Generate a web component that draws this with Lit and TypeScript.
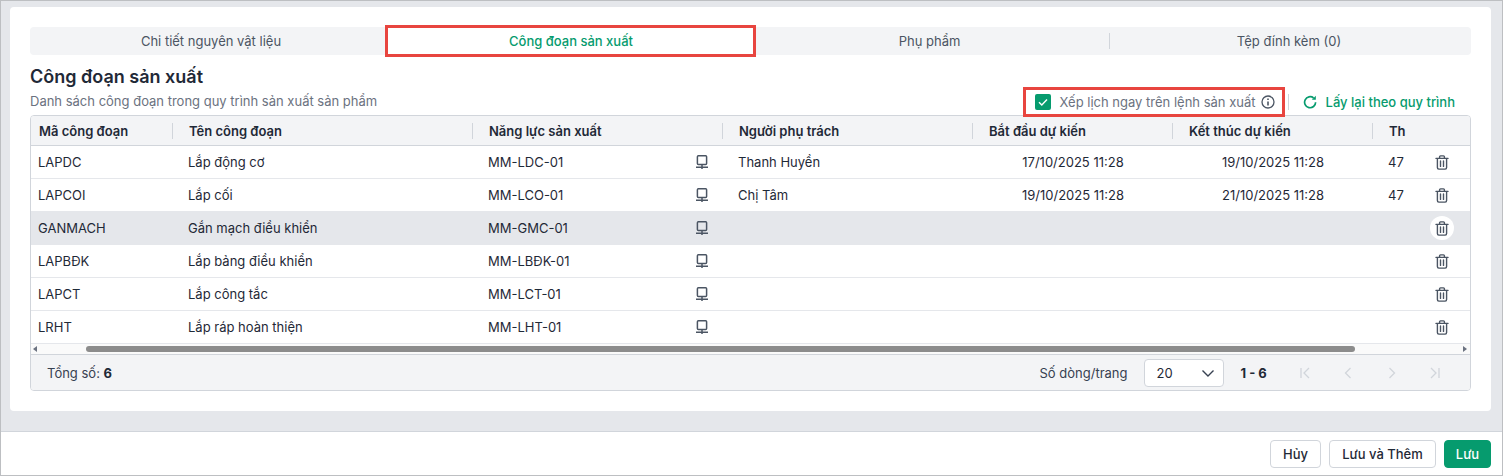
import { LitElement, html, css, svg } from "lit";
import { customElement } from "lit/decorators.js";

const ROWS = [
  { code: "LAPDC", name: "Lắp động cơ", cap: "MM-LDC-01", owner: "Thanh Huyền", start: "17/10/2025 11:28", end: "19/10/2025 11:28", th: "47" },
  { code: "LAPCOI", name: "Lắp cối", cap: "MM-LCO-01", owner: "Chị Tâm", start: "19/10/2025 11:28", end: "21/10/2025 11:28", th: "47" },
  { code: "GANMACH", name: "Gắn mạch điều khiển", cap: "MM-GMC-01", owner: "", start: "", end: "", th: "", hover: true },
  { code: "LAPBĐK", name: "Lắp bảng điều khiển", cap: "MM-LBĐK-01", owner: "", start: "", end: "", th: "" },
  { code: "LAPCT", name: "Lắp công tắc", cap: "MM-LCT-01", owner: "", start: "", end: "", th: "" },
  { code: "LRHT", name: "Lắp ráp hoàn thiện", cap: "MM-LHT-01", owner: "", start: "", end: "", th: "" },
];

const HEADERS = ["Mã công đoạn", "Tên công đoạn", "Năng lực sản xuất", "Người phụ trách", "Bắt đầu dự kiến", "Kết thúc dự kiến", "Th"];

const netIcon = html`<svg class="net" width="14" height="15" viewBox="0 0 14 15" fill="none" stroke="#4b5563" stroke-width="1.5">
  <rect x="2.4" y="0.8" width="9.2" height="8.6" rx="1"></rect>
  <path d="M7 9.4v4.6M1 12.2h12"></path>
</svg>`;

const trashIcon = svg`<svg width="14" height="15" viewBox="0 0 14 15" fill="none" stroke="#4b5563" stroke-width="1.4" stroke-linecap="round" stroke-linejoin="round">
  <path d="M1 3.4h12"></path>
  <path d="M4.6 3.2V1.8c0-.5.4-.9.9-.9h3c.5 0 .9.4.9.9v1.4"></path>
  <path d="M2.4 3.6v9c0 .8.6 1.5 1.4 1.5h6.4c.8 0 1.4-.7 1.4-1.5v-9"></path>
  <path d="M5.5 6v5.4M8.5 6v5.4"></path>
</svg>`;

@customElement("app-root")
export class AppRoot extends LitElement {
  static styles = css`
    :host {
      display: block;
      width: 1503px;
      height: 476px;
      font-family: Inter, "Noto Sans", sans-serif;
      font-size: 13px;
      color: #1f2937;
    }
    * { box-sizing: border-box; }
    .page {
      width: 100%;
      height: 100%;
      display: flex;
      flex-direction: column;
      background: #e5e7eb;
      border: 1px solid #bdbfc2;
      overflow: hidden;
    }
    .card {
      margin: 6px 11px 0 9px;
      height: 404px;
      flex: none;
      background: #fff;
      border-radius: 4px;
      padding: 20px 20px 0;
    }
    .tabs {
      display: grid;
      grid-template-columns: 362px 358px 359px 362px;
      height: 28px;
      background: #f3f4f6;
      border-radius: 4px;
      color: #4b5563;
    }
    .tab {
      display: flex;
      align-items: center;
      justify-content: center;
      position: relative;
    }
    .tab.active {
      margin: 1px -3px 1px -4px;
      padding-left: 1px;
      background: #fff;
      color: #069b6e;
      font-weight: 500;
      outline: 3px solid #e8453f;
    }
    .tab.sep { padding-right: 2px; }
    .tab.sep::before {
      content: "";
      position: absolute;
      left: 0;
      top: 6px;
      bottom: 6px;
      width: 1px;
      background: #d1d5db;
    }
    .heading {
      display: flex;
      justify-content: space-between;
      align-items: flex-end;
      height: 60px;
    }
    h2 {
      margin: 0;
      font-size: 18px;
      line-height: 24px;
      font-weight: 600;
      color: #1f2937;
      padding-top: 12px;
    }
    .sub {
      margin-top: 2px;
      line-height: 20px;
      color: #6b7280;
      padding-bottom: 4px;
    }
    .tools {
      display: flex;
      align-items: center;
      height: 24px;
      margin-bottom: 1px;
      padding-right: 16px;
    }
    .sched {
      display: flex;
      align-items: center;
      color: #6b7280;
      height: 24px;
      width: 256px;
      padding-left: 9px;
      outline: 3px solid #e8453f;
      margin: 0 3px 0 0;
    }
    .check {
      width: 16px;
      height: 16px;
      border-radius: 2px;
      background: #069b6e;
      display: flex;
      align-items: center;
      justify-content: center;
      margin-right: 9px;
    }
    .info { margin-left: 5px; }
    .divider {
      width: 1px;
      height: 16px;
      background: #d1d5db;
      margin: 0 14px 0 3px;
    }
    .reload {
      display: flex;
      align-items: center;
      gap: 9px;
      color: #069b6e;
      font-weight: 500;
    }
    .table {
      height: 276px;
      border: 1px solid #d1d5db;
      border-radius: 4px;
      overflow: hidden;
    }
    .row {
      display: grid;
      grid-template-columns: 142px 300px 250px 250px 200px 200px 39px 58px;
      height: 33px;
      border-bottom: 1px solid #e5e7eb;
      align-items: center;
    }
    .row.head {
      height: 30px;
      background: #f3f4f6;
      border-bottom-color: #d1d5db;
      font-weight: 600;
      color: #1f2937;
    }
    .row.hover { background: #e5e7eb; }
    .hc {
      padding-left: 16px;
      line-height: 16px;
      border-right: 1px solid #d1d5db;
      white-space: nowrap;
      overflow: hidden;
    }
    .hc:first-child { padding-left: 8px; }
    .hc:nth-child(7), .hc.blank { border-right: 0; }
    .c { padding-left: 15px; white-space: nowrap; }
    .c:first-child { padding-left: 7px; }
    .c.cap {
      display: flex;
      justify-content: space-between;
      align-items: center;
      padding-right: 14px;
    }
    .c.mid { padding-left: 0; text-align: center; }
    .c.act { padding: 0 0 0 2px; display: flex; justify-content: center; }
    .trash {
      width: 24px;
      height: 24px;
      border-radius: 50%;
      display: flex;
      align-items: center;
      justify-content: center;
    }
    .hover .trash { background: #fff; }
    .scroll {
      height: 11px;
      background: #fafafa;
      border-bottom: 1px solid #d1d5db;
      display: flex;
      align-items: center;
      padding: 0 3px 0 2px;
    }
    .track { flex: 1; padding: 0 108px 0 49px; }
    .thumb { height: 6px; border-radius: 3px; background: #8c8c8c; }
    .arrow { width: 0; height: 0; border: 3px solid transparent; }
    .arrow.l { border-right: 4px solid #6b7280; border-left-width: 0; }
    .arrow.r { border-left: 4px solid #6b7280; border-right-width: 0; }
    .foot {
      height: 35px;
      background: #f3f4f6;
      display: flex;
      align-items: center;
      padding-left: 16px;
    }
    .total { flex: 1; color: #374151; }
    .total b, .range { font-weight: 700; color: #1f2937; }
    .size-label { color: #374151; margin-right: 16px; }
    .select {
      width: 80px;
      height: 28px;
      background: #fff;
      border: 1px solid #d1d5db;
      border-radius: 4px;
      display: flex;
      align-items: center;
      justify-content: space-between;
      padding: 0 8px 0 12px;
      margin-right: 17px;
    }
    .range { width: 26px; margin-right: 30px; white-space: nowrap; }
    .pager { display: flex; gap: 27.5px; padding-right: 27px; }
    .pager svg { display: block; }
    .spacer { height: 20px; flex: none; }
    .bar {
      flex: 1;
      background: #fff;
      border-top: 1px solid #d1d5db;
      display: flex;
      justify-content: flex-end;
      align-items: center;
      gap: 8px;
      padding: 0 11px 0 0;
    }
    .btn {
      height: 28px;
      border: 1px solid #d1d5db;
      border-radius: 4px;
      background: #fff;
      display: flex;
      align-items: center;
      justify-content: center;
      font-weight: 500;
      color: #1f2937;
    }
    .btn.cancel { width: 51px; }
    .btn.more { width: 107px; }
    .btn.save { width: 47px; background: #069b6e; border-color: #069b6e; color: #fff; }
  `;

  render() {
    const chev = (d: string) => html`<svg width="16" height="16" viewBox="0 0 16 16" fill="none" stroke="#d1d5db" stroke-width="1.3"><path d=${d}></path></svg>`;
    return html`
      <div class="page">
        <div class="card">
          <div class="tabs">
            <div class="tab">Chi tiết nguyên vật liệu</div>
            <div class="tab active">Công đoạn sản xuất</div>
            <div class="tab">Phụ phẩm</div>
            <div class="tab sep">Tệp đính kèm (0)</div>
          </div>
          <div class="heading">
            <div>
              <h2>Công đoạn sản xuất</h2>
              <div class="sub">Danh sách công đoạn trong quy trình sản xuất sản phẩm</div>
            </div>
            <div class="tools">
              <div class="sched">
                <span class="check">
                  <svg width="12" height="12" viewBox="0 0 12 12" fill="none" stroke="#fff" stroke-width="1.4"><path d="M2 6.2l2.8 2.8L10 3.4"></path></svg>
                </span>
                Xếp lịch ngay trên lệnh sản xuất
                <svg class="info" width="14" height="14" viewBox="0 0 14 14" fill="none" stroke="#4b5563" stroke-width="1.3">
                  <circle cx="7" cy="7" r="6"></circle>
                  <path d="M7 6.4v4" stroke-width="1.6"></path>
                  <path d="M7 3.6v1.5" stroke-width="1.6"></path>
                </svg>
              </div>
              <span class="divider"></span>
              <div class="reload">
                <svg width="14" height="14" viewBox="0 0 14 14" fill="none" stroke="#069b6e" stroke-width="1.7">
                  <path d="M12.6 7.2A5.5 5.5 0 1 1 10.6 3"></path>
                  <path d="M12.8 0.8v4H8.8z" fill="#069b6e" stroke="none"></path>
                </svg>
                Lấy lại theo quy trình
              </div>
            </div>
          </div>
          <div class="table">
            <div class="row head">
              ${HEADERS.map((h) => html`<div class="hc">${h}</div>`)}
              <div class="hc blank"></div>
            </div>
            ${ROWS.map((r) => html`
              <div class="row ${r.hover ? "hover" : ""}">
                <div class="c">${r.code}</div>
                <div class="c">${r.name}</div>
                <div class="c cap"><span>${r.cap}</span>${netIcon}</div>
                <div class="c">${r.owner}</div>
                <div class="c mid">${r.start}</div>
                <div class="c mid">${r.end}</div>
                <div class="c">${r.th}</div>
                <div class="c act"><span class="trash">${trashIcon}</span></div>
              </div>
            `)}
            <div class="scroll">
              <span class="arrow l"></span>
              <div class="track"><div class="thumb"></div></div>
              <span class="arrow r"></span>
            </div>
            <div class="foot">
              <div class="total">Tổng số: <b>6</b></div>
              <span class="size-label">Số dòng/trang</span>
              <div class="select">
                <span>20</span>
                <svg width="14" height="14" viewBox="0 0 14 14" fill="none" stroke="#374151" stroke-width="1.4"><path d="M1.5 4.5L7 10l5.5-5.5"></path></svg>
              </div>
              <span class="range">1 - 6</span>
              <div class="pager">
                ${chev("M4 3v10M12 3L7 8l5 5")}
                ${chev("M10.5 3L5.5 8l5 5")}
                ${chev("M5.5 3l5 5-5 5")}
                ${chev("M12 3v10M4 3l5 5-5 5")}
              </div>
            </div>
          </div>
        </div>
        <div class="spacer"></div>
        <div class="bar">
          <div class="btn cancel">Hủy</div>
          <div class="btn more">Lưu và Thêm</div>
          <div class="btn save">Lưu</div>
        </div>
      </div>
    `;
  }
}
